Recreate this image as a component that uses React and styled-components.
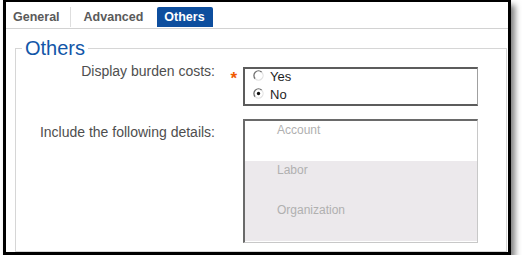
import React from "react";
import styled, { createGlobalStyle } from "styled-components";

const Global = createGlobalStyle`
  html, body { margin: 0; padding: 0; background: #fff; }
  body { font-family: "Liberation Sans", Arial, sans-serif; }
`;

const Frame = styled.div`
  box-sizing: border-box;
  margin-left: 3px;
  width: 508px;
  height: 255px;
  border: 3px solid #000;
  border-top-width: 2px;
  background: #fff;
  box-shadow: 4px 5px 6px rgba(0, 0, 0, 0.5);
  display: flex;
  flex-direction: column;
`;

const TabBar = styled.div`
  display: flex;
  align-items: flex-end;
  padding: 5px 0 1px 7px;
  border-bottom: 1px solid #d2d2d2;
`;

const Tab = styled.div`
  height: 20px;
  line-height: 20px;
  font-size: 12.5px;
  font-weight: bold;
  padding: ${(p) => p.$pad};
  color: ${(p) => (p.$active ? "#fff" : "#5a5a5a")};
  background: ${(p) => (p.$active ? "#0d4e9e" : "transparent")};
  border-radius: ${(p) => (p.$active ? "2px 2px 0 0" : "0")};
  border-right: ${(p) => (p.$sep ? "1px solid #dedede" : "none")};
`;

const Fieldset = styled.fieldset`
  flex: 1;
  margin: 8px 1px 0 9px;
  padding: 3px 0 0 0;
  border: 1px solid #d6d6d6;
  min-width: 0;
`;

const Legend = styled.legend`
  margin-left: 6px;
  padding: 0 3px;
  font-size: 20px;
  line-height: 23px;
  color: #1256a8;
`;

const Row = styled.div`
  display: grid;
  grid-template-columns: 199px 28px 235px;
  align-items: start;
  margin-bottom: ${(p) => p.$after || 0}px;
`;

const Label = styled.div`
  margin-top: ${(p) => p.$offset || 0}px;
  text-align: right;
  font-size: 14px;
  line-height: 16px;
  color: #4e4e4e;
`;

const Marker = styled.div`
  margin-top: ${(p) => p.$offset || 0}px;
  padding-right: 6px;
  text-align: right;
  color: #f05a00;
  font-size: 17px;
  font-weight: bold;
  line-height: 16px;
`;

const RadioBox = styled.div`
  margin-top: ${(p) => p.$offset || 0}px;
  box-sizing: border-box;
  height: 39px;
  border: 2px solid #5c5c5c;
  border-right: 1px solid #a0a0a0;
  padding: 0 0 0 8px;
  display: flex;
  flex-direction: column;
  gap: 2px;
`;

const RadioItem = styled.label`
  display: flex;
  align-items: center;
  gap: 6px;
  height: 16px;
  font-size: 13px;
  line-height: 16px;
  color: #1e1e1e;
`;

const RadioIcon = styled.svg`
  width: 11px;
  height: 11px;
  flex: none;
  margin-top: -3px;
`;

const ListBox = styled.div`
  box-sizing: border-box;
  height: 124px;
  border-top: 2px solid #6a6a6a;
  border-left: 2px solid #6a6a6a;
  border-right: 1px solid #c8c8c8;
  border-bottom: 1px solid #c8c8c8;
  display: flex;
  flex-direction: column;
`;

const Option = styled.div`
  height: 40px;
  box-sizing: border-box;
  padding: 2px 0 0 32px;
  font-size: 12px;
  line-height: 14px;
  color: #b0b0b0;
  background: ${(p) => (p.$shaded ? "#ece9ec" : "#fff")};
`;

function Radio({ checked }) {
  return (
    <RadioIcon viewBox="0 0 12 12">
      <circle cx="6" cy="6" r="5" fill="#fff" />
      <path d="M2.46 9.54 A5 5 0 0 1 9.54 2.46" fill="none" stroke="#6e6e6e" strokeWidth="1.4" />
      <path d="M9.54 2.46 A5 5 0 0 1 2.46 9.54" fill="none" stroke="#e2e2e2" strokeWidth="1.3" />
      {checked && <circle cx="6" cy="6" r="1.8" fill="#111" />}
    </RadioIcon>
  );
}

export default function App() {
  return (
    <>
      <Global />
      <Frame>
        <TabBar>
          <Tab $pad="0 10px 0 0" $sep>General</Tab>
          <Tab $pad="0 14px 0 13px">Advanced</Tab>
          <Tab $pad="0 8px 0 7px" $active>Others</Tab>
        </TabBar>
        <Fieldset>
          <Legend>Others</Legend>
          <Row $after={13}>
            <Label>Display burden costs:</Label>
            <Marker $offset={8}>*</Marker>
            <RadioBox $offset={4}>
              <RadioItem>
                <Radio />
                Yes
              </RadioItem>
              <RadioItem>
                <Radio checked />
                No
              </RadioItem>
            </RadioBox>
          </Row>
          <Row>
            <Label $offset={5}>Include the following details:</Label>
            <div />
            <ListBox>
              <Option>Account</Option>
              <Option $shaded>Labor</Option>
              <Option $shaded>Organization</Option>
            </ListBox>
          </Row>
        </Fieldset>
      </Frame>
    </>
  );
}
